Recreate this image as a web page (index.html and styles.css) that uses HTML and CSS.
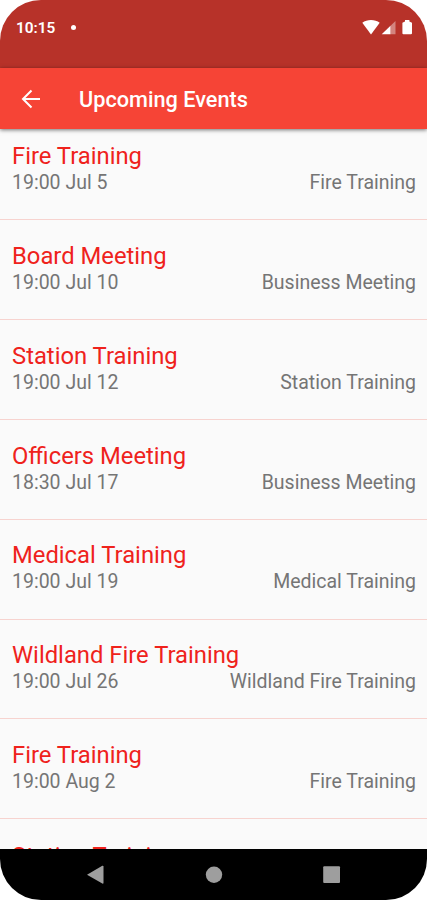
FILE: index.html
```html
<!DOCTYPE html>
<html lang="en">
<head>
<meta charset="utf-8">
<title>Upcoming Events</title>
<link rel="stylesheet" href="styles.css">
</head>
<body>
<div class="phone">
  <div class="status">
    <span class="clock">10:15</span><span class="dot"></span>
    <svg class="status-icons" width="52" height="20" viewBox="0 0 52 20">
      <path fill="#fff" d="M.3 5.8C5 2.2 13 2.2 17.7 5.8L9 17.5Z"/>
      <path fill="#fff" d="M19.7 17.3 28.5 8.7V17.3Z"/>
      <path fill="#fff" fill-opacity=".4" d="M28.5 8.7 33.5 4V17.3H28.5Z"/>
      <path fill="#fff" d="M43 3H47.4V4.4L50 5.7V16.3Q50 17.3 49 17.3H41.4Q40.4 17.3 40.4 16.3V5.7L43 4.4Z"/>
    </svg>
  </div>
  <header class="appbar">
    <svg class="back" width="20" height="20" viewBox="0 0 20 20" fill="none" stroke="#fff" stroke-width="2"><path d="M19 10H2.5M10.5 1.5 2 10 10.5 18.5"/></svg>
    <h1>Upcoming Events</h1>
  </header>
  <main class="list">
    <article><h2>Fire Training</h2><p><span>19:00 Jul 5</span><span>Fire Training</span></p></article>
    <article><h2>Board Meeting</h2><p><span>19:00 Jul 10</span><span>Business Meeting</span></p></article>
    <article><h2>Station Training</h2><p><span>19:00 Jul 12</span><span>Station Training</span></p></article>
    <article><h2>Officers Meeting</h2><p><span>18:30 Jul 17</span><span>Business Meeting</span></p></article>
    <article><h2>Medical Training</h2><p><span>19:00 Jul 19</span><span>Medical Training</span></p></article>
    <article><h2>Wildland Fire Training</h2><p><span>19:00 Jul 26</span><span>Wildland Fire Training</span></p></article>
    <article><h2>Fire Training</h2><p><span>19:00 Aug 2</span><span>Fire Training</span></p></article>
    <article><h2>Station Training</h2></article>
  </main>
  <nav class="navbar">
    <svg width="427" height="51" viewBox="0 0 427 51" fill="#9e9e9e">
      <path d="M87 25.7 102.3 16.8Q103.5 16.3 103.5 17.5V33.8Q103.5 35 102.3 34.5Z"/>
      <circle cx="214" cy="25.7" r="8.2"/>
      <rect x="323.2" y="17.2" width="16.8" height="16.8" rx="1"/>
    </svg>
  </nav>
</div>
</body>
</html>
```
FILE: styles.css
```css
* { box-sizing: border-box; margin: 0; }
body { background: #fff; font-family: Roboto, sans-serif; }
.phone {
  width: 427px; height: 900px;
  display: flex; flex-direction: column;
  border-radius: 41px; overflow: hidden;
  background: #fafafa;
}
.status {
  flex: 0 0 67.5px; padding: 17px 13px 0 16px;
  display: flex; align-items: flex-start;
  background: #b73229; color: #fff;
}
.clock { font-size: 15.4px; font-weight: 600; line-height: 23px; }
.dot { width: 5px; height: 5px; margin: 7.5px 0 0 16px; border-radius: 50%; background: #fff; }
.status-icons { margin-left: auto; }
.appbar {
  flex: 0 0 61px; z-index: 1;
  display: flex; align-items: center; padding: 1px 0 0 21px;
  background: #f64436; color: #fff;
  box-shadow: 0 1px 4px rgba(0, 0, 0, .55);
}
.appbar h1 { margin: 2px 0 0 38px; font-size: 21.7px; font-weight: 500; line-height: 30px; }
.list { flex: 1; min-height: 0; overflow: hidden; }
.list article {
  height: 99.9px; padding: 21.8px 11px 0 12px;
  border-bottom: 1px solid #f7d3cf;
}
.list article:first-child { height: 91.5px; padding-top: 13.5px; }
.list article:last-child { padding-top: 23px; }
.list h2 { color: #ef221c; font-size: 23.8px; font-weight: 400; line-height: 28px; }
.list p {
  display: flex; justify-content: space-between;
  color: #757575; font-size: 19.5px; line-height: 26px;
}
.navbar { flex: 0 0 51px; background: #000; }
.navbar svg { display: block; }
```
